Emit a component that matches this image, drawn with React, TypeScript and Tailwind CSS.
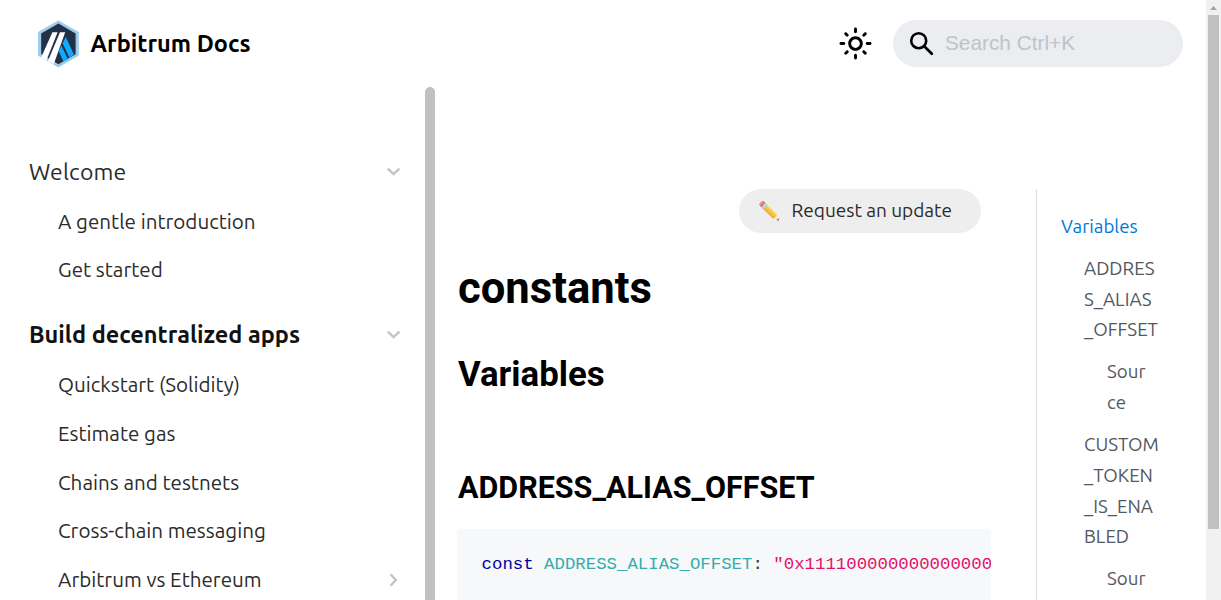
const ui = "font-['Ubuntu','Noto_Sans',sans-serif]";

function Logo() {
  return (
    <svg width="42" height="48" viewBox="0 0 42 48" className="block shrink-0">
      <path d="M21.4 0.9 41.2 12.2v23.2L21.4 47 1.6 35.4V12.2Z" fill="#9dcced" stroke="#9dcced" strokeWidth="1" strokeLinejoin="round" />
      <path d="M21.4 3.4 38.6 13.4v20.8L21.4 44.2 4.2 34.2V13.4Z" fill="#213147" />
      <path d="M28.8 17 36.9 34.4 32.4 37.7 25.6 23.2Z" fill="#12aaff" />
      <path d="M24.4 25.6 30.9 39.2 26.6 41.8 21.8 31.2Z" fill="#12aaff" />
      <path d="M15.4 12.3h5.2L9.4 40.4 4.2 37.2Z" fill="#fff" />
      <path d="M23 12.3h5.2L16.8 44 10.8 41.2Z" fill="#fff" />
    </svg>
  );
}

function Sun() {
  return (
    <svg width="35" height="35" viewBox="0 0 24 24" fill="#000" className="block">
      <path d="M12,9c1.65,0,3,1.35,3,3s-1.35,3-3,3s-3-1.35-3-3S10.35,9,12,9 M12,7c-2.76,0-5,2.24-5,5s2.24,5,5,5s5-2.24,5-5 S14.76,7,12,7L12,7z M2,13l2,0c0.55,0,1-0.45,1-1s-0.45-1-1-1l-2,0c-0.55,0-1,0.45-1,1S1.45,13,2,13z M20,13l2,0c0.55,0,1-0.45,1-1 s-0.45-1-1-1l-2,0c-0.55,0-1,0.45-1,1S19.45,13,20,13z M11,2v2c0,0.55,0.45,1,1,1s1-0.45,1-1V2c0-0.55-0.45-1-1-1S11,1.45,11,2z M11,20v2c0,0.55,0.45,1,1,1s1-0.45,1-1v-2c0-0.55-0.45-1-1-1C11.45,19,11,19.45,11,20z M5.99,4.58c-0.39-0.39-1.03-0.39-1.41,0 c-0.39,0.39-0.39,1.03,0,1.41l1.06,1.06c0.39,0.39,1.03,0.39,1.41,0s0.39-1.03,0-1.41L5.99,4.58z M18.36,16.95 c-0.39-0.39-1.03-0.39-1.41,0c-0.39,0.39-0.39,1.03,0,1.41l1.06,1.06c0.39,0.39,1.03,0.39,1.41,0c0.39-0.39,0.39-1.03,0-1.41 L18.36,16.95z M19.42,5.99c0.39-0.39,0.39-1.03,0-1.41c-0.39-0.39-1.03-0.39-1.41,0l-1.06,1.06c-0.39,0.39-0.39,1.03,0,1.41 s1.03,0.39,1.41,0L19.42,5.99z M7.05,18.36c0.39-0.39,0.39-1.03,0-1.41c-0.39-0.39-1.03-0.39-1.41,0l-1.06,1.06 c-0.39,0.39-0.39,1.03,0,1.41s1.03,0.39,1.41,0L7.05,18.36z" />
    </svg>
  );
}

function Chevron({ right = false }: { right?: boolean }) {
  return (
    <svg width="16" height="16" viewBox="0 0 16 16" fill="none" stroke="#c4c4c4" strokeWidth="2.4" className="block">
      <path d={right ? "M5.6 2.2 10.8 8 5.6 13.8" : "M2.8 4.6 8.6 10.2 14.4 4.6"} />
    </svg>
  );
}

type Row = { label: string; row: string; text: string; arrow?: "down" | "right" };

const rows: Row[] = [
  { label: "Welcome", row: "h-[50px] pl-[29px]", text: "text-[23px] tracking-[0.15px] text-[#2b2b2b]", arrow: "down" },
  { label: "A gentle introduction", row: "h-[49px] pl-[58px]", text: "pt-px text-[20.6px] text-[#2b2b2b]" },
  { label: "Get started", row: "h-[48px] pl-[58px]", text: "text-[20.6px] text-[#2b2b2b]" },
  { label: "Build decentralized apps", row: "mt-[15px] h-[51px] pl-[29px]", text: "text-[23.5px] font-bold text-[#111]", arrow: "down" },
  { label: "Quickstart (Solidity)", row: "h-[50px] pl-[58px]", text: "text-[20.6px] text-[#2b2b2b]" },
  { label: "Estimate gas", row: "h-[49px] pl-[58px]", text: "text-[20.6px] text-[#2b2b2b]" },
  { label: "Chains and testnets", row: "h-[49px] pl-[58px]", text: "text-[20.6px] text-[#2b2b2b]" },
  { label: "Cross-chain messaging", row: "h-[47px] pl-[58px]", text: "text-[20.6px] text-[#2b2b2b]" },
  { label: "Arbitrum vs Ethereum", row: "h-[50px] pl-[58px]", text: "text-[20.6px] text-[#2b2b2b]", arrow: "right" },
];

export default function App() {
  return (
    <div className={`${ui} flex h-[600px] w-[1221px] overflow-hidden bg-white`}>
      <div className="flex w-[1206px] flex-col">
        <header className="flex h-[87px] shrink-0 items-center pr-[23px] pl-[37px]">
          <Logo />
          <span className="ml-[11.5px] text-[23.5px] font-bold whitespace-nowrap text-black">Arbitrum Docs</span>
          <div className="ml-auto flex items-center">
            <Sun />
            <div className="ml-5 flex h-[47px] w-[290px] items-center rounded-full bg-[#ebedf0] pl-4">
              <svg width="25" height="25" viewBox="0 0 25 25" fill="none" stroke="#000" className="block">
                <circle cx="9.7" cy="9.7" r="7.5" strokeWidth="2.6" />
                <path d="M15.2 15.2 22.8 22.8" strokeWidth="2.7" strokeLinecap="round" />
              </svg>
              <span className="ml-[11px] pb-0.5 font-['Liberation_Sans',sans-serif] text-[20.8px] text-[#bfc3c9]">Search Ctrl+K</span>
            </div>
          </div>
        </header>
        <div className="flex min-h-0 flex-1">
          <aside className="flex w-[435px] shrink-0">
            <nav className="flex w-[425px] flex-col overflow-hidden pt-[60px] pr-6">
              {rows.map((r) => (
                <div key={r.label} className={`${r.row} flex shrink-0 items-center justify-between`}>
                  <span className={`${r.text} whitespace-nowrap`}>{r.label}</span>
                  {r.arrow && <Chevron right={r.arrow === "right"} />}
                </div>
              ))}
            </nav>
            <div className="w-[10px] rounded-t-[5px] bg-[#c0c0c0]" />
          </aside>
          <main className="flex w-[556px] shrink-0 flex-col overflow-hidden pt-[102px] pl-[22px] font-['Roboto',sans-serif] font-bold text-black">
            <button className={`${ui} mr-[10px] flex h-11 w-[242px] shrink-0 items-center self-end rounded-full bg-[#eeeeee] pb-0.5 pl-[19px] text-[19px] font-normal text-[#2b2b2b]`}>
              <span className="w-[33.5px] text-left text-[18px] opacity-80">✏️</span>
              <span className="whitespace-nowrap">Request an update</span>
            </button>
            <h1 className="mt-[29px] h-[54px] shrink-0 pl-px text-[43.6px] leading-[54px]">constants</h1>
            <h2 className="mt-[36px] h-[44px] shrink-0 pl-px text-[34.8px] leading-[44px]">Variables</h2>
            <h3 className="mt-[73px] h-[38px] shrink-0 pl-px text-[30.5px] leading-[38px]">ADDRESS_ALIAS_OFFSET</h3>
            <pre className="mt-[22px] h-[90px] shrink-0 overflow-hidden rounded-[5px] bg-[#f6f8fa] pt-[21px] pl-[24.6px] font-['Liberation_Mono',monospace] text-[17.36px] leading-[30px] font-normal text-[#393a34]">
              <span className="text-[#00009f]">const</span> <span className="text-[#36acaa]">ADDRESS_ALIAS_OFFSET</span>: <span className="text-[#e3116c]">"0x111100000000000000000</span>
            </pre>
          </main>
          <aside className="mt-[102px] ml-[45px] w-[150px] overflow-hidden border-l border-[#dadde1] pt-[23px] pl-6 text-[18.7px] leading-[30.7px] text-[#525860]">
            <div className="text-[#0079d6]">Variables</div>
            <div className="mt-[11.3px] pl-[23px]">ADDRES<br />S_ALIAS<br />_OFFSET</div>
            <div className="mt-[11.3px] pl-[46px]">Sour<br />ce</div>
            <div className="mt-[11.3px] pl-[23px]">CUSTOM<br />_TOKEN<br />_IS_ENA<br />BLED</div>
            <div className="mt-[11.3px] pl-[46px]">Sour</div>
          </aside>
        </div>
      </div>
      <div className="flex w-[15px] flex-col items-center bg-[#f1f1f1]">
        <svg width="15" height="15" viewBox="0 0 15 15" className="block shrink-0">
          <path d="M4 10h7L7.5 6Z" fill="#a3a3a3" />
        </svg>
        <div className="h-[514px] w-[11px] bg-[#c1c1c1]" />
      </div>
    </div>
  );
}
